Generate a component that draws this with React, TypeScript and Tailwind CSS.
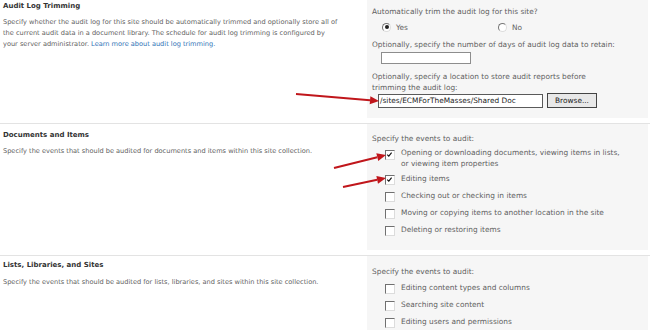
import React from "react";

const font = { fontFamily: '"DejaVu Sans", Verdana, sans-serif' };

const Check: React.FC<{ checked?: boolean }> = ({ checked }) => (
  <span className="relative inline-block w-[10px] h-[10px] shrink-0 bg-white border border-t-[#707070] border-l-[#707070] border-r-[#dcdcdc] border-b-[#dcdcdc]">
    {checked && (
      <svg viewBox="0 0 10 10" className="absolute left-0 top-0 w-[8px] h-[8px]">
        <path d="M1.5 4.5 L3.5 6.5 L7 2" stroke="#111" strokeWidth="1.4" fill="none" />
      </svg>
    )}
  </span>
);

const Radio: React.FC<{ checked?: boolean }> = ({ checked }) => (
  <span className="inline-flex items-center justify-center w-[9px] h-[9px] rounded-full border border-t-[#777] border-l-[#777] border-r-[#ddd] border-b-[#ddd] bg-white">
    {checked && <span className="w-[4px] h-[4px] rounded-full bg-[#222]" />}
  </span>
);

const Item: React.FC<{ checked?: boolean; children: React.ReactNode }> = ({ checked, children }) => (
  <div className="flex items-start gap-[6px] pl-[13px] h-[17px]">
    <span className="mt-[2px]">
      <Check checked={checked} />
    </span>
    <span className="leading-[11px]">{children}</span>
  </div>
);

const Arrow: React.FC<{ x1: number; y1: number; x2: number; y2: number }> = ({ x1, y1, x2, y2 }) => {
  const a = Math.atan2(y2 - y1, x2 - x1);
  const l = 9;
  const w = 4;
  const bx = x2 - l * Math.cos(a);
  const by = y2 - l * Math.sin(a);
  const p1 = `${bx + w * Math.sin(a)},${by - w * Math.cos(a)}`;
  const p2 = `${bx - w * Math.sin(a)},${by + w * Math.cos(a)}`;
  return (
    <g>
      <line x1={x1} y1={y1} x2={bx} y2={by} stroke="#c0161b" strokeWidth="2" />
      <polygon points={`${x2},${y2} ${p1} ${p2}`} fill="#c0161b" />
    </g>
  );
};

export default function App() {
  return (
    <div className="relative w-[650px] h-[330px] bg-white overflow-hidden text-[#5f5f5f]" style={font}>
      {/* Audit Log Trimming */}
      <div className="flex h-[123px]">
        <div className="w-[367px] pl-[3px] pt-[1px]">
          <div className="text-[7px] font-bold text-[#333] leading-[11px]">Audit Log Trimming</div>
          <div className="mt-[5px] text-[6.6px] leading-[11px] whitespace-nowrap">
            <div>
              Specify whether the audit log for this site should be automatically trimmed and optionally store all of
            </div>
            <div>the current audit data in a document library. The schedule for audit log trimming is configured by</div>
            <div>
              your server administrator. <span className="text-[#2f73b6]">Learn more about audit log trimming.</span>
            </div>
          </div>
        </div>
        <div className="w-[281px] h-[118px] bg-[#f6f6f6] pl-[5px] pt-[6px] text-[7.4px] leading-[11px]">
          <div>Automatically trim the audit log for this site?</div>
          <div className="flex items-center h-[16px] mt-[2px]">
            <div className="flex items-center gap-[5px] w-[126px] pl-[10px]">
              <Radio checked />
              <span>Yes</span>
            </div>
            <div className="flex items-center gap-[5px]">
              <Radio />
              <span>No</span>
            </div>
          </div>
          <div className="mt-[4px]">Optionally, specify the number of days of audit log data to retain:</div>
          <div className="ml-[9px] mt-[2px] w-[90px] h-[12px] bg-white border border-[#8d8d8d]" />
          <div className="mt-[7px] w-[240px]">
            Optionally, specify a location to store audit reports before trimming the audit log:
          </div>
          <div className="flex items-center gap-[4px] ml-[6px]">
            <div className="w-[165px] h-[14px] bg-white border border-[#5a5a5a] overflow-hidden whitespace-nowrap text-[#222] text-[7.4px] leading-[12px] pl-[1px]">
              /sites/ECMForTheMasses/Shared Doc
            </div>
            <div className="w-[50px] h-[15px] flex items-center justify-center bg-[#e8e8e8] border border-[#444] text-[#222] text-[7.4px]">
              Browse...
            </div>
          </div>
        </div>
      </div>
      <div className="h-[1px] bg-[#e3e3e3]" />

      {/* Documents and Items */}
      <div className="flex h-[131px]">
        <div className="w-[367px] pl-[3px] pt-[6px]">
          <div className="text-[7px] font-bold text-[#333] leading-[11px]">Documents and Items</div>
          <p className="mt-[5px] text-[6.6px] leading-[11px]">
            Specify the events that should be audited for documents and items within this site collection.
          </p>
        </div>
        <div className="w-[281px] h-[126px] bg-[#f6f6f6] pl-[5px] pt-[9px] text-[7.4px] leading-[11px]">
          <div className="mb-[3px]">Specify the events to audit:</div>
          <div className="flex items-start gap-[6px] pl-[13px] h-[26px]">
            <span className="mt-[3px]">
              <Check checked />
            </span>
            <span className="leading-[11px]">
              Opening or downloading documents, viewing items in lists,
              <br />
              or viewing item properties
            </span>
          </div>
          <Item checked>Editing items</Item>
          <Item>Checking out or checking in items</Item>
          <Item>Moving or copying items to another location in the site</Item>
          <Item>Deleting or restoring items</Item>
        </div>
      </div>
      <div className="h-[1px] bg-[#e3e3e3]" />

      {/* Lists, Libraries, and Sites */}
      <div className="flex h-[80px]">
        <div className="w-[367px] pl-[3px] pt-[4px]">
          <div className="text-[7px] font-bold text-[#333] leading-[11px]">Lists, Libraries, and Sites</div>
          <p className="mt-[6px] text-[6.6px] leading-[11px]">
            Specify the events that should be audited for lists, libraries, and sites within this site collection.
          </p>
        </div>
        <div className="w-[281px] bg-[#f6f6f6] pl-[5px] pt-[10px] text-[7.4px] leading-[11px]">
          <div className="mb-[5px]">Specify the events to audit:</div>
          <Item>Editing content types and columns</Item>
          <Item>Searching site content</Item>
          <Item>Editing users and permissions</Item>
        </div>
      </div>

      <svg className="absolute left-0 top-0 pointer-events-none" width="650" height="330">
        <Arrow x1={296} y1={94} x2={379} y2={101} />
        <Arrow x1={334} y1={168} x2={386} y2={155} />
        <Arrow x1={343} y1={187} x2={386} y2={178} />
      </svg>
    </div>
  );
}
